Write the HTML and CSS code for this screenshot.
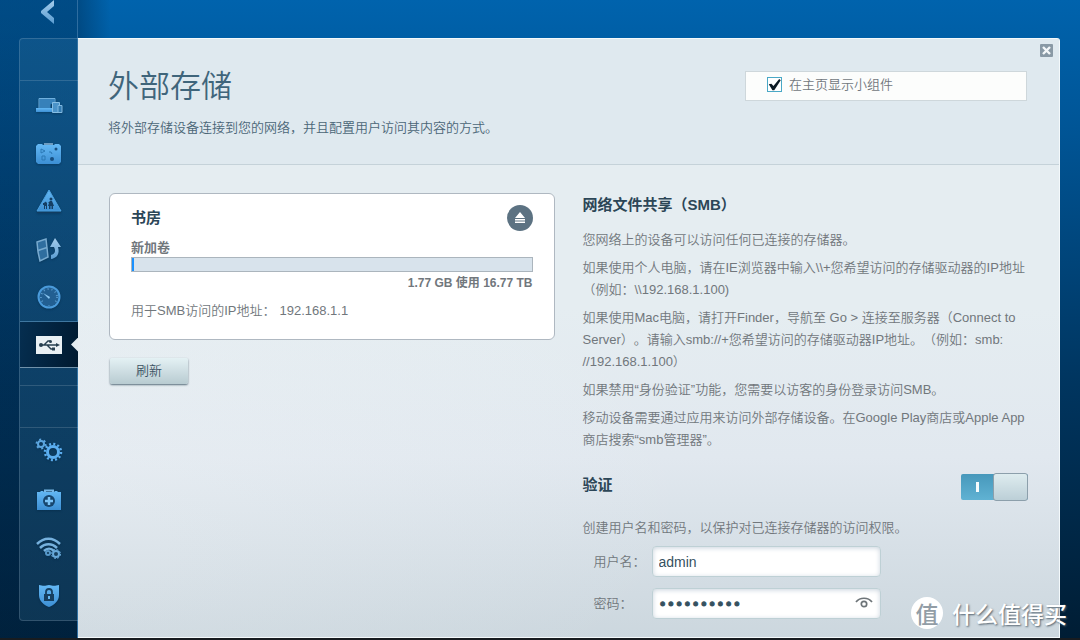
FILE: index.html
```html
<!DOCTYPE html>
<html lang="zh-CN">
<head>
<meta charset="utf-8">
<meta name="viewport" content="width=device-width, initial-scale=1">
<title>外部存储</title>
<link rel="stylesheet" href="styles.css">
</head>
<body>
<svg class="defs" aria-hidden="true">
  <defs>
    <linearGradient id="blue" x1="0" y1="0" x2="0" y2="1"><stop offset="0" stop-color="#64b8f4"/><stop offset="1" stop-color="#3c8fd4"/></linearGradient>
    <linearGradient id="pale" x1="0" y1="0" x2="0" y2="1"><stop offset="0" stop-color="#a5cdec"/><stop offset="1" stop-color="#5a9dd2"/></linearGradient>
  </defs>
</svg>
<div class="shell">
  <aside class="sidebar">
    <button class="back" type="button" aria-label="返回"><svg width="14" height="24" viewBox="0 0 14 24"><path d="M13 0v6L6 12l7 6v6L0 13v-2z" fill="url(#pale)"/></svg></button>
    <nav class="menu" aria-label="主菜单">
      <div class="block block-top"></div>
      <a class="item" href="#devices" aria-label="设备"><svg width="28" height="28" viewBox="0 0 28 28"><path d="M4 17V7.500h16V12" fill="#2c79b3" stroke="#70b0dd"/><path d="M4.500 8h15v4h-4v5h-11z" fill="#3781ba"/><path d="M1 17h16v4H1z" fill="url(#blue)"/><path d="M17.500 11.500h7v10h-7z" fill="#4b93c9" stroke="#86bee4"/><path d="M23 14.500h4v7h-4z" fill="#327bb2" stroke="#80b9e1"/></svg></a>
      <a class="item" href="#apps" aria-label="应用"><svg width="28" height="28" viewBox="0 0 28 28"><path d="M9 4h9v2H9z" fill="#6d9cc0"/><path d="M3 5h4l1 1h11l1-1h4l2 2v16l-2 2H3l-2-2V7z" fill="url(#blue)"/><path d="M6 10l4 2-4 2zM7 17h3v4H7zM14 13h2l1 2" fill="none" stroke="#2a78b5"/><circle cx="21" cy="10" r="1.500" fill="#174f80"/><circle cx="17" cy="20" r="2" fill="#174f80"/></svg></a>
      <a class="item" href="#parental" aria-label="家长控制"><svg width="28" height="28" viewBox="0 0 28 28"><path d="M14 3l12 21H2z" fill="url(#blue)" stroke="#4ca1df" stroke-linejoin="round"/><path d="M2 25.500h24" stroke="#123c60"/><g fill="#153f65"><circle cx="16" cy="12" r="1.500"/><circle cx="10.500" cy="16" r="1.200"/><path d="M15 14h2l2 5h-1v3h-1.500v-3h-1v3H14v-3h-1l1-3h-2v6h-1v-3h-1v3H9v-4H8v-2h5z"/></g></svg></a>
      <a class="item" href="#sync" aria-label="端口转发"><svg width="28" height="28" viewBox="0 0 28 28"><path d="M2 7l9-3 1 9 1 9-8 4-2-9z" fill="#2f6e9f" stroke="#78abd0" stroke-width="1.500"/><path d="M3 15.500l9-3" stroke="#78abd0" stroke-width="1.500"/><path d="M20 3l6 9h-3c2 7-1 11-7 12v-4c4-1 5-4 3-8h-4z" fill="url(#pale)"/></svg></a>
      <a class="item" href="#speed" aria-label="测速"><svg width="28" height="28" viewBox="0 0 28 28"><circle cx="14" cy="14" r="10.500" fill="#225f92" stroke="#4a9bdb" stroke-width="2"/><circle cx="14" cy="14" r="8" fill="none" stroke="#5798ca" stroke-width="2" stroke-dasharray="1 3"/><path d="M8 18h12v4H8z" fill="#225f92"/><path d="M8 10l7 4-1 2z" fill="#8bc8f3"/></svg></a>
      <a class="item item-active" href="#usb" aria-label="外部存储" aria-current="page"><svg width="26" height="18" viewBox="0 0 26 18"><path d="M0 0h26v18H0z" fill="#e9f0f4"/><path d="M5 9h16M8 9l4-4h2M11 9l4 4h2" fill="none" stroke="#263f50" stroke-width="1.400"/><circle cx="5" cy="9" r="2" fill="#263f50"/><circle cx="14.500" cy="5.500" r="1.500" fill="#263f50"/><path d="M16 11.500h3v3h-3zM20 7l4 2-4 2z" fill="#263f50"/></svg></a>
      <div class="space"></div>
      <div class="block"></div>
      <a class="item" href="#settings" aria-label="设置"><svg width="28" height="28" viewBox="0 0 28 28"><circle cx="6" cy="6" r="3" fill="none" stroke="#5ba5de" stroke-width="2"/><circle cx="6" cy="6" r="4.500" fill="none" stroke="#5ba5de" stroke-width="2" stroke-dasharray="2 2.710"/><circle cx="18" cy="14" r="5.500" fill="none" stroke="#5baef0" stroke-width="3"/><circle cx="18" cy="14" r="8" fill="none" stroke="#5baef0" stroke-width="2.500" stroke-dasharray="2 2.190"/></svg></a>
      <a class="item" href="#system" aria-label="系统"><svg width="28" height="28" viewBox="0 0 28 28"><path d="M10 6V4.500h8V6" fill="none" stroke="#78b7e6" stroke-width="2"/><path d="M2 6h3l1-1h2l1 1h10l1-1h2l1 1h3v18H2z" fill="url(#blue)"/><circle cx="14" cy="15" r="6" fill="#17466e"/><path d="M14 11v8M10 15h8" stroke="#7bc3f6" stroke-width="2.500"/></svg></a>
      <a class="item" href="#wifi" aria-label="无线"><svg width="28" height="28" viewBox="0 0 28 28"><path d="M2 10c7-7 16-7 23 0M5 14c5-5 12-5 17 0M9 17c3-3 7-3 10 0" fill="none" stroke="#76b1de" stroke-width="2.500"/><circle cx="13" cy="19" r="2" fill="none" stroke="#5698c9" stroke-width="2"/><circle cx="21" cy="20" r="3" fill="#17405f" stroke="#67a9da" stroke-width="2"/><circle cx="21" cy="20" r="4.500" fill="none" stroke="#67a9da" stroke-dasharray="2 1.530"/></svg></a>
      <a class="item" href="#security" aria-label="安全"><svg width="28" height="28" viewBox="0 0 28 28"><path d="M4 3c4 1 6 1 10 0 4 1 6 1 10 0v10c0 6-5 10-10 12C9 23 4 19 4 13z" fill="url(#blue)"/><path d="M11 13v-3c0-4 6-4 6 0v3" fill="none" stroke="#163f60" stroke-width="1.800"/><path d="M9 12h10v7H9z" fill="#163f60"/><path d="M13 14h2v3h-2z" fill="#65b6ef"/></svg></a>
    </nav>
  </aside>

  <main class="panel">
    <header class="head">
      <div class="intro">
        <h1 class="title">外部存储</h1>
        <p class="lead">将外部存储设备连接到您的网络，并且配置用户访问其内容的方式。</p>
      </div>
      <label class="widget"><input class="tick" type="checkbox" checked><span>在主页显示小组件</span></label>
      <button class="close" type="button" aria-label="关闭"><svg width="13" height="13" viewBox="0 0 13 13"><rect width="13" height="13" rx="1" fill="#8999a5"/><path d="M3 3l7 7M10 3l-7 7" stroke="#f4f7f9" stroke-width="2.400"/></svg></button>
    </header>

    <div class="columns">
      <section class="storage">
        <div class="card">
          <div class="card-head">
            <h2 class="heading">书房</h2>
            <button class="eject" type="button" aria-label="弹出"><svg width="26" height="26" viewBox="0 0 26 26"><circle cx="13" cy="13" r="13" fill="#5c7282"/><path d="M13 7l5 6H8zM8 14h10v1.500H8zM8 16.500h10V18H8z" fill="#fff"/></svg></button>
          </div>
          <div class="volume" id="volume">新加卷</div>
          <div class="meter" role="meter" aria-labelledby="volume" aria-valuemin="0" aria-valuemax="16770" aria-valuenow="2"><div class="meter-fill"></div></div>
          <p class="usage">1.77 GB 使用 16.77 TB</p>
          <p class="address"><span>用于SMB访问的IP地址：</span><span>192.168.1.1</span></p>
        </div>
        <button class="refresh" type="button">刷新</button>
      </section>

      <section class="info">
        <h2 class="heading">网络文件共享（SMB）</h2>
        <div class="copy">
          <p>您网络上的设备可以访问任何已连接的存储器。</p>
          <p>如果使用个人电脑，请在IE浏览器中输入\\+您希望访问的存储驱动器的IP地址<br>（例如：\\192.168.1.100)</p>
          <p>如果使用Mac电脑，请打开Finder，导航至 Go &gt; 连接至服务器（Connect to Server）。请输入smb://+您希望访问的存储驱动器IP地址。（例如：smb:<br>//192.168.1.100）</p>
          <p>如果禁用“身份验证”功能，您需要以访客的身份登录访问SMB。</p>
          <p>移动设备需要通过应用来访问外部存储设备。在Google Play商店或Apple App商店搜索“smb管理器”。</p>
        </div>
        <div class="auth">
          <h2 class="heading" id="auth">验证</h2>
          <input class="switch" type="checkbox" role="switch" aria-labelledby="auth" checked>
        </div>
        <p class="note">创建用户名和密码，以保护对已连接存储器的访问权限。</p>
        <form class="form">
          <label for="user">用户名：</label>
          <input class="field" id="user" type="text" value="admin">
          <label for="pass">密码：</label>
          <div class="secret">
            <input class="field field-secret" id="pass" type="password" value="admin12345">
            <button class="reveal" type="button" aria-label="显示密码"><svg width="18" height="12" viewBox="0 0 18 12"><path d="M1 5c4-5 12-5 16 0" fill="none" stroke="#6d7478" stroke-width="1.700"/><circle cx="9" cy="7" r="2.700" fill="none" stroke="#6d7478" stroke-width="1.700"/></svg></button>
          </div>
        </form>
      </section>
    </div>
  </main>
</div>
<div class="mark"><span class="mark-badge">值</span><span>什么值得买</span></div>
</body>
</html>
```
FILE: styles.css
```css
* { box-sizing: border-box; }

body {
  margin: 0;
  min-height: 100vh;
  position: relative;
  background: linear-gradient(#0063ad, #005596 20%, #00355f 60%, #001d34);
  border-bottom: 2px solid #181c20;
  font: 350 13px/22px "Liberation Sans", "Noto Sans CJK SC", sans-serif;
  text-spacing-trim: space-all;
  color: #71777c;
}

h1, h2, p { margin: 0; }

button { padding: 0; border: 0; background: none; font: inherit; cursor: pointer; }

svg { display: block; }

.defs { position: absolute; width: 0; height: 0; }

.shell {
  display: grid;
  grid-template-columns: 78px 1fr;
  min-height: calc(100vh - 2px);
  padding-right: 20px;
  background: linear-gradient(90deg, #00284b66 78px, #00284b00 110px);
}

.sidebar {
  display: flex;
  flex-direction: column;
  padding-left: 19px;
  background: linear-gradient(#00529200, #001f3a22);
  border-right: 1px solid #2e6da0;
}

.back {
  display: flex;
  justify-content: center;
  height: 38px;
}

.menu {
  border: 1px solid #ffffff26;
  border-right: 0;
  border-radius: 4px 0 0 4px;
  background: #4285b033;
  margin-right: -1px;
}

.block {
  height: 43px;
  border-top: 1px solid #ffffff24;
  border-bottom: 1px solid #ffffff24;
}

.block-top { height: 42px; border-top: 0; }

.item {
  display: flex;
  align-items: center;
  justify-content: center;
  height: 48px;
}

.item svg { filter: drop-shadow(0 1px 1px #00203c66); }

.item-active {
  position: relative;
  height: 47px;
  border-top: 1px solid #3f77a0;
  border-bottom: 1px solid #7192aa;
  background: linear-gradient(100deg, #052e50, #001a30);
}

.item-active::after {
  content: "";
  position: absolute;
  right: 0;
  width: 7px;
  height: 14px;
  background: #e4ecf0;
  clip-path: polygon(100% 0, 100% 100%, 0 50%);
}

.space { height: 17px; }

.panel {
  margin-top: 38px;
  border: 1px solid #f4f9fb;
  border-left: 0;
  border-radius: 0 3px 0 0;
  background:
    radial-gradient(ellipse at 0 75%, #f4f8fa44, #f4f8fa00 45%),
    linear-gradient(#e5edf1 45%, #e1e8ef 70%, #ccd7de);
}

.head {
  display: flex;
  justify-content: space-between;
  position: relative;
  height: 126px;
  padding: 25px 32px 0 30px;
  background: #dfe9ef;
  border-bottom: 1px solid #c5d2d9;
}

.title {
  font-size: 31px;
  font-weight: 350;
  line-height: 46px;
  color: #3f657b;
}

.lead { padding-top: 7px; color: #4b6677; }

.widget {
  display: flex;
  align-items: center;
  gap: 7px;
  width: 282px;
  height: 30px;
  margin-top: 7px;
  padding: 0 21px 3px;
  border: 1px solid #ced7db;
  background: #fcfdfc;
}

.tick {
  appearance: none;
  width: 15px;
  height: 15px;
  margin: 0;
  border: 1px solid #49a8c6;
  background: #fff;
}

.tick:checked::after {
  content: "";
  display: block;
  width: 13px;
  height: 13px;
  background: #0c1a24;
  clip-path: polygon(6% 48%, 26% 44%, 42% 62%, 86% 8%, 98% 18%, 48% 94%, 34% 94%);
}

.close { position: absolute; top: 5px; right: 6px; }

.columns {
  display: grid;
  grid-template-columns: 1fr 1fr;
  gap: 28px;
  padding: 28px 31px 18px;
}

.card {
  padding: 11px 21px 17px;
  border: 1px solid #afb8c1;
  border-radius: 6px;
  background: #fff;
}

.card-head {
  display: flex;
  align-items: center;
  justify-content: space-between;
}

.heading {
  font-size: 15px;
  font-weight: 700;
  line-height: 22px;
  color: #2c4657;
}

.volume { padding-top: 8px; font-weight: 700; line-height: 18px; }

.meter {
  height: 15px;
  border: 1px solid #abb5bd;
  background: #d8e3ec;
}

.meter-fill { width: 2px; height: 100%; background: #1991ff; }

.usage { text-align: right; font-weight: 700; font-size: 12px; line-height: 22px; }

.address { display: flex; gap: 4px; padding-top: 6px; }

.refresh {
  width: 78px;
  height: 26px;
  margin: 18px 1px 0;
  border-radius: 2px;
  background: linear-gradient(#e4f1f4, #b8cbd1);
  box-shadow: 0 1px 2px #596f7c;
  color: #3c5363;
}

.info { padding-top: 1px; }

.copy {
  display: grid;
  gap: 6px;
  padding-top: 13px;
}

.auth {
  display: flex;
  align-items: flex-start;
  justify-content: space-between;
  padding-top: 23px;
}

.switch {
  appearance: none;
  display: flex;
  align-items: center;
  width: 67px;
  height: 26px;
  margin: 0;
  border-radius: 2px;
  background: linear-gradient(#4798bb, #60b2d3);
}

.switch::before {
  content: "";
  width: 3px;
  height: 10px;
  margin-left: 15px;
  background: #f5fbfd;
}

.switch::after {
  content: "";
  width: 33px;
  height: 26px;
  margin-left: auto;
  border: 1px solid #8c9fab;
  border-radius: 3px;
  background: linear-gradient(#deecef, #bccfd7);
}

.note { padding-top: 17px; }

.form {
  display: grid;
  grid-template-columns: 58px 229px;
  align-items: center;
  gap: 11px 0;
  padding: 7px 0 0 11px;
}

.field {
  display: block;
  width: 100%;
  height: 31px;
  padding: 0 6px;
  border: 1px solid #bed0d5;
  border-radius: 4px;
  background: #fff;
  box-shadow: inset 0 1px 5px #c9d3dd;
  font: 14px "Liberation Sans", "Noto Sans CJK SC", sans-serif;
  color: #355160;
}

.field-secret { font-family: "DejaVu Sans", sans-serif; -webkit-text-stroke: 1px #355160; }

.secret { position: relative; }

.reveal { position: absolute; right: 8px; top: 9px; }

.mark {
  display: flex;
  align-items: center;
  gap: 9px;
  position: absolute;
  right: 13px;
  bottom: 9px;
  font: 500 23px/32px "Noto Sans CJK SC", sans-serif;
  color: #fff;
  text-shadow: 1px 1px 2px #53626e;
}

.mark-badge {
  width: 32px;
  height: 32px;
  border-radius: 50%;
  background: #fff;
  color: #929da6;
  text-align: center;
  text-shadow: none;
}
```
